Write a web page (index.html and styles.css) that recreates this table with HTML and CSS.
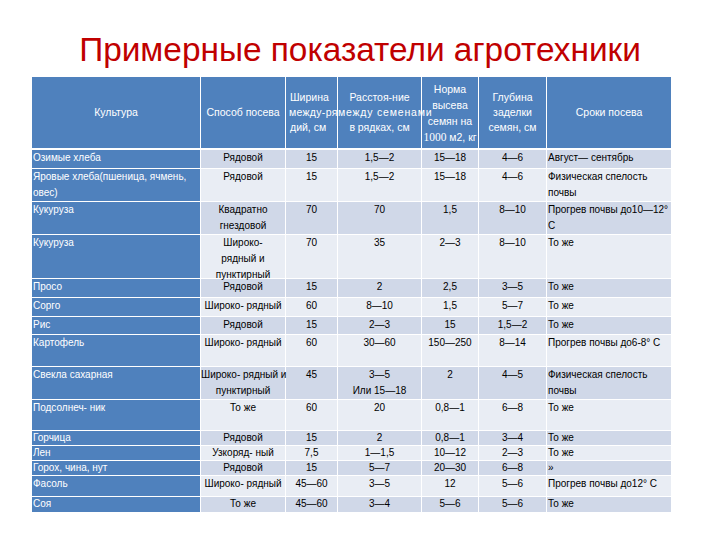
FILE: index.html
```html
<!DOCTYPE html>
<html lang="ru">
<head>
<meta charset="utf-8">
<title>Примерные показатели агротехники</title>
<link rel="stylesheet" href="styles.css">
</head>
<body>
<div class="slide">
  <h1 class="title">Примерные показатели агротехники</h1>
  <table class="agro">
    <colgroup>
      <col class="c1"><col class="c2"><col class="c3"><col class="c4"><col class="c5"><col class="c6"><col class="c7">
    </colgroup>
    <thead>
      <tr>
        <th>Культура</th>
        <th>Способ посева</th>
        <th class="left3">Ширина<br><span class="spread-s">между-ря</span><br>дий, см</th>
        <th>Расстоя-ние<br><span class="spread">между семенами</span><br>в рядках, см</th>
        <th class="tall">Норма<br>высева<br>семян на<br><span class="num">1000</span> м2, кг</th>
        <th>Глубина<br>заделки<br>семян, см</th>
        <th>Сроки посева</th>
      </tr>
    </thead>
    <tbody>
      <tr class="dark h19">
        <td>Озимые хлеба</td><td>Рядовой</td><td>15</td><td>1,5—2</td><td>15—18</td><td>4—6</td><td>Август— сентябрь</td>
      </tr>
      <tr class="light h33">
        <td>Яровые хлеба(пшеница, ячмень,<br>овес)</td><td>Рядовой</td><td>15</td><td>1,5—2</td><td>15—18</td><td>4—6</td><td>Физическая спелость<br>почвы</td>
      </tr>
      <tr class="dark h32">
        <td>Кукуруза</td><td>Квадратно<br>гнездовой</td><td>70</td><td>70</td><td>1,5</td><td>8—10</td><td>Прогрев почвы до10—12°<br>С</td>
      </tr>
      <tr class="light h44">
        <td>Кукуруза</td><td><div class="three">Широко-<br>рядный и<br>пунктирный</div></td><td>70</td><td>35</td><td>2—3</td><td>8—10</td><td>То же</td>
      </tr>
      <tr class="dark h19">
        <td>Просо</td><td>Рядовой</td><td>15</td><td>2</td><td>2,5</td><td>3—5</td><td>То же</td>
      </tr>
      <tr class="light h19">
        <td>Сорго</td><td>Широко- рядный</td><td>60</td><td>8—10</td><td>1,5</td><td>5—7</td><td>То же</td>
      </tr>
      <tr class="dark h18">
        <td>Рис</td><td>Рядовой</td><td>15</td><td>2—3</td><td>15</td><td>1,5—2</td><td>То же</td>
      </tr>
      <tr class="light h32">
        <td>Картофель</td><td>Широко- рядный</td><td>60</td><td>30—60</td><td>150—250</td><td>8—14</td><td>Прогрев почвы до6-8° С</td>
      </tr>
      <tr class="dark h31">
        <td>Свекла сахарная</td><td>Широко- рядный и<br>пунктирный</td><td>45</td><td>3—5<br>Или 15—18</td><td>2</td><td>4—5</td><td>Физическая спелость<br>почвы</td>
      </tr>
      <tr class="light h31">
        <td>Подсолнеч- ник</td><td>То же</td><td>60</td><td>20</td><td>0,8—1</td><td>6—8</td><td>То же</td>
      </tr>
      <tr class="dark h15">
        <td>Горчица</td><td>Рядовой</td><td>15</td><td>2</td><td>0,8—1</td><td>3—4</td><td>То же</td>
      </tr>
      <tr class="light h15">
        <td>Лен</td><td>Узкоряд- ный</td><td>7,5</td><td>1—1,5</td><td>10—12</td><td>2—3</td><td>То же</td>
      </tr>
      <tr class="dark h15">
        <td>Горох, чина, нут</td><td>Рядовой</td><td>15</td><td>5—7</td><td>20—30</td><td>6—8</td><td>»</td>
      </tr>
      <tr class="light h21">
        <td>Фасоль</td><td>Широко- рядный</td><td>45—60</td><td>3—5</td><td>12</td><td>5—6</td><td>Прогрев почвы до12° С</td>
      </tr>
      <tr class="dark h15">
        <td>Соя</td><td>То же</td><td>45—60</td><td>3—4</td><td>5—6</td><td>5—6</td><td>То же</td>
      </tr>
    </tbody>
  </table>
</div>
</body>
</html>
```
FILE: styles.css
```css
html, body {
  margin: 0;
  padding: 0;
  background: #ffffff;
}

.slide {
  width: 720px;
  height: 540px;
  overflow: hidden;
  font-family: "Liberation Sans", Arial, sans-serif;
}

.title {
  margin: 0;
  padding: 30px 0 7px;
  height: 40px;
  line-height: 40px;
  font-size: 33.4px;
  font-weight: normal;
  text-align: center;
  color: #c00000;
}

.agro {
  margin-left: 32px;
  width: 639px;
  table-layout: fixed;
  border-collapse: separate;
  border-spacing: 0;
  font-size: 10px;
}

.c1 { width: 169px; }
.c2 { width: 85px; }
.c3 { width: 52px; }
.c4 { width: 84px; }
.c5 { width: 57px; }
.c6 { width: 68px; }
.c7 { width: 124px; }

.agro th {
  height: 73px;
  box-sizing: border-box;
  padding: 0;
  background: #4f81bd;
  color: #ffffff;
  font-size: 10.5px;
  font-weight: normal;
  line-height: 15px;
  text-align: center;
  vertical-align: middle;
  white-space: nowrap;
  border-right: 1px solid #ffffff;
  border-bottom: 2px solid #ffffff;
}

.agro th.tall {
  line-height: 16px;
}

.agro th.left3 {
  text-align: left;
  padding-left: 4px;
}

.spread {
  letter-spacing: 0.8px;
}

.spread-s {
  letter-spacing: 0.3px;
  margin-left: -1px;
}

.num {
  font-family: "Liberation Serif", "Times New Roman", serif;
  font-size: 11.5px;
}

.agro th:last-child,
.agro td:last-child {
  border-right: none;
}

.agro td {
  padding: 0;
  line-height: 16px;
  color: #000000;
  text-align: center;
  vertical-align: top;
  white-space: nowrap;
  border-right: 1px solid #ffffff;
  border-bottom: 1px solid #ffffff;
}

.agro td:first-child {
  background: #4f81bd;
  color: #ffffff;
  text-align: left;
  padding-left: 1px;
}

.agro td:last-child {
  text-align: left;
  padding-left: 1px;
}

.agro tr:last-child td {
  border-bottom: none;
}

.dark td { background: #d0d8e8; }
.light td { background: #e9edf4; }

.three {
  height: 43px;
}

.h15 { height: 15px; }
.h15 td { line-height: 14px; }
.h18 { height: 18px; }
.h19 { height: 19px; }
.h21 { height: 21px; }
.h31 { height: 31px; }
.h32 { height: 32px; }
.h33 { height: 33px; }
.h44 { height: 44px; }
```
